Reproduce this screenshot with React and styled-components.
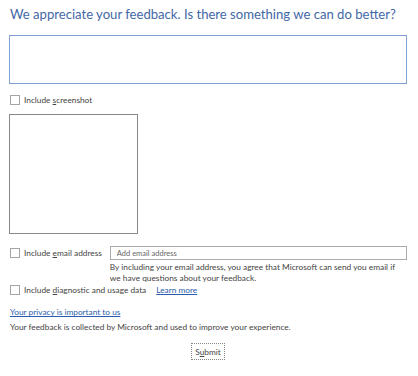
import React from 'react'
import styled, { createGlobalStyle } from 'styled-components'

const Global = createGlobalStyle`
  html, body { margin: 0; padding: 0; background: #fff; }
  body { font-family: Lato, "Open Sans", sans-serif; }
`

function App() {
  return (
    <Page>
      <Global />
      <Title>We appreciate your feedback. Is there something we can do better?</Title>
      <Comment defaultValue="" autoFocus />
      <CheckRow $top={9}>
        <Box />
        <Label>Include <u>s</u>creenshot</Label>
      </CheckRow>
      <Shot />
      <EmailRow>
        <CheckRow>
          <Box />
          <Label>Include <u>e</u>mail address</Label>
        </CheckRow>
        <EmailCol>
          <EmailInput placeholder="Add email address" />
          <Note>
            By including your email address, you agree that Microsoft can send you email if
            <br />
            we have questions about your feedback.
          </Note>
        </EmailCol>
      </EmailRow>
      <CheckRow>
        <Box />
        <Label>Include <u>d</u>iagnostic and usage data</Label>
        <Link>Learn more</Link>
      </CheckRow>
      <Privacy>Your privacy is important to us</Privacy>
      <Small>Your feedback is collected by Microsoft and used to improve your experience.</Small>
      <Actions>
        <Submit>S<u>u</u>bmit</Submit>
      </Actions>
    </Page>
  )
}

export default App

const Page = styled.div`
  width: 418px;
  height: 376px;
  box-sizing: border-box;
  padding: 4px 11px 0 9px;
  display: flex;
  flex-direction: column;
  color: #444;
  font-size: 8.3px;
  overflow: hidden;
`

const Title = styled.div`
  font-size: 13.1px;
  color: #4368a6;
  padding-left: 1px;
  line-height: 20px;
  white-space: nowrap;
`

const Comment = styled.textarea`
  margin-top: 11px;
  height: 49px;
  box-sizing: border-box;
  border: 1px solid #7f9fd4;
  resize: none;
  outline: none;
  padding: 2px 3px;
  font-family: inherit;
  font-size: 9px;
  caret-color: #555;
`

const CheckRow = styled.div`
  display: flex;
  align-items: center;
  height: 14px;
  gap: 4px;
  padding-left: 1px;
  margin-top: ${p => p.$top || 0}px;
`

const Box = styled.span`
  width: 8px;
  height: 8px;
  border: 1px solid #a5a5a5;
  background: #fff;
  flex: none;
`

const Label = styled.span`
  white-space: nowrap;
  u { text-decoration: underline; }
`

const Shot = styled.div`
  width: 129px;
  height: 120px;
  box-sizing: border-box;
  border: 1px solid #888;
  margin: 7px 0 12px 0;
`

const EmailRow = styled.div`
  display: flex;
  align-items: flex-start;
  gap: 8px;
`

const EmailCol = styled.div`
  flex: 1;
  min-width: 0;
  display: flex;
  flex-direction: column;
`

const EmailInput = styled.input`
  height: 14px;
  box-sizing: border-box;
  border: 1px solid #ababab;
  font: inherit;
  font-size: 7.5px;
  padding: 0 6px;
  outline: none;
  &::placeholder { color: #666; }
`

const Note = styled.div`
  margin-top: 2px;
  line-height: 11px;
  white-space: nowrap;
  margin-bottom: -1px;
`

const Link = styled.span`
  color: #2c5cad;
  text-decoration: underline;
  margin-left: 6px;
`

const Privacy = styled.span`
  color: #2c5cad;
  text-decoration: underline;
  margin-top: 10px;
  padding-left: 1px;
  line-height: 11px;
`

const Small = styled.div`
  margin-top: 4px;
  line-height: 11px;
  padding-left: 1px;
`

const Actions = styled.div`
  display: flex;
  justify-content: center;
  margin-top: 10px;
`

const Submit = styled.button`
  font: inherit;
  color: #444;
  background: #fff;
  border: 1px dotted #888;
  height: 17px;
  padding: 0 3px;
`
